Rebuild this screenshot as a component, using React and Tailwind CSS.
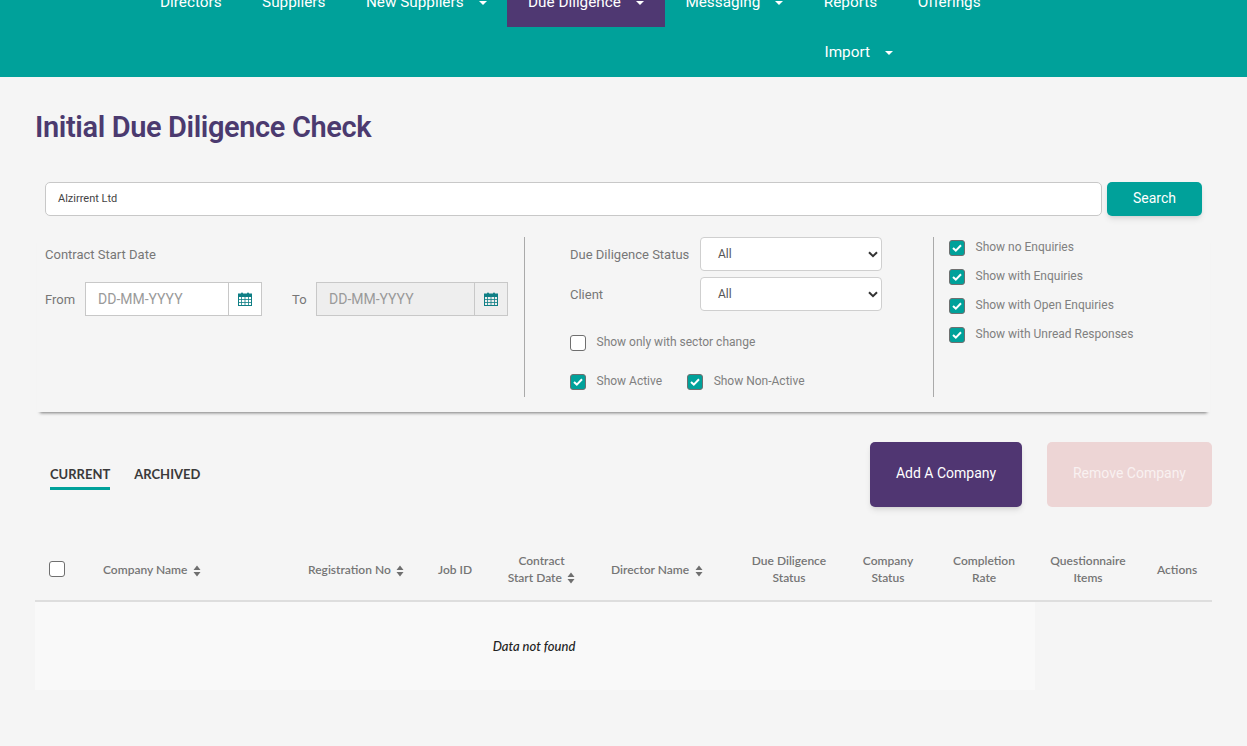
const teal = 'bg-[#00a19a]';

function Caret() {
  return <span className="ml-[15px] inline-block h-0 w-0 border-x-[4px] border-t-[4px] border-x-transparent border-t-white" />;
}

function NavItem({ label, caret, active }) {
  return (
    <a className={`flex h-[50px] items-center pt-[1px] text-[15.3px] text-white ${active ? 'bg-[#4f3872] px-[21.25px]' : 'px-[20.25px]'}`}>
      {label}
      {caret && <Caret />}
    </a>
  );
}

function CalendarIcon() {
  return (
    <svg width="14" height="14" viewBox="0 0 14 14" className="text-[#0f7f85]">
      <rect x="0.5" y="2" width="13" height="11.5" fill="none" stroke="currentColor" />
      <rect x="0.5" y="2" width="13" height="3" fill="currentColor" />
      <rect x="3" y="0.5" width="2" height="3.5" rx="1" fill="currentColor" />
      <rect x="9" y="0.5" width="2" height="3.5" rx="1" fill="currentColor" />
      <path d="M0.5 7.5H13.5M0.5 10.5H13.5M3.5 5V13.5M7 5V13.5M10.5 5V13.5" stroke="currentColor" strokeWidth="0.8" fill="none" />
    </svg>
  );
}

function SortIcon() {
  return (
    <svg width="8" height="12" viewBox="0 0 8 12" className="ml-[5.5px] inline-block text-[#6f6f6f]">
      <path d="M4 0.5L7.5 5H0.5Z M4 11.5L0.5 7H7.5Z" fill="currentColor" />
    </svg>
  );
}

function Check({ checked, label, className = '' }) {
  return (
    <label className={`flex items-center ${className}`}>
      <span className={`flex h-[16px] w-[16px] items-center justify-center rounded-[3px] border border-[#6f6f6f] ${checked ? teal : 'bg-white'}`}>
        {checked && (
          <svg width="10" height="8" viewBox="0 0 10 8">
            <path d="M1 4L3.8 6.6L9 1.2" fill="none" stroke="white" strokeWidth="2" />
          </svg>
        )}
      </span>
      <span className="-mt-[2px] ml-[10.5px] text-[12px] text-[#808080]">{label}</span>
    </label>
  );
}

function DateInput({ label, disabled, labelClass, fieldClass }) {
  return (
    <div className="flex items-center">
      <span className={`pt-[1px] text-[13px] text-[#777] ${labelClass}`}>{label}</span>
      <div className={`flex h-[34px] border border-[#c8c8c8] ${fieldClass} ${disabled ? 'bg-[#eee]' : 'bg-white'}`}>
        <span className="flex flex-1 items-center pt-[1px] pl-[12px] text-[14px] text-[#9a9a9a]">DD-MM-YYYY</span>
        <span className="flex w-[33px] items-center justify-center border-l border-[#c8c8c8]">
          <CalendarIcon />
        </span>
      </div>
    </div>
  );
}

function Select() {
  return (
    <div className="flex h-[34px] w-[182px] items-center justify-between rounded-[4px] border border-[#cfcfcf] bg-white pr-[3px] pl-[17px] text-[12px] text-[#555]">
      All
      <svg width="10" height="7" viewBox="0 0 10 7">
        <path d="M1 1.2L5 5.2L9 1.2" fill="none" stroke="#333" strokeWidth="2" />
      </svg>
    </div>
  );
}

function Th({ children, className = '' }) {
  return <div className={`flex h-full flex-col justify-center ${className}`}>{children}</div>;
}

export default function App() {
  return (
    <div className="h-[746px] overflow-hidden bg-[#f5f5f5] font-['Roboto',sans-serif]">
      <header className={`-mt-[23px] h-[100px] ${teal}`}>
        <nav className="flex pl-[139.75px]">
          <NavItem label="Directors" />
          <NavItem label="Suppliers" />
          <NavItem label="New Suppliers" caret />
          <NavItem label="Due Diligence" caret active />
          <NavItem label="Messaging" caret />
          <NavItem label="Reports" />
          <NavItem label="Offerings" />
        </nav>
        <nav className="flex pl-[804.25px]">
          <NavItem label="Import" caret />
        </nav>
      </header>

      <main className="px-[35px]">
        <h1 className="mt-[30px] h-[41px] text-[29px] leading-[40px] font-semibold tracking-[-0.38px] text-[#4b3a6f]">
          Initial Due Diligence Check
        </h1>

        <div className="mt-[34px] ml-[10px] flex w-[1157px] gap-[5px]">
          <div className="flex h-[34px] flex-1 items-center rounded-[5px] border border-[#c8c8c8] bg-white pl-[12px] text-[11px] text-[#444]">
            Alzirrent Ltd
          </div>
          <button className={`h-[34px] w-[95px] rounded-[5px] pb-[1px] text-[14px] text-white shadow-md ${teal}`}>
            Search
          </button>
        </div>

        <section className="mt-[21px] ml-[2px] flex h-[175px] w-[1173px] shadow-[0_4px_3px_-3px_rgba(0,0,0,0.5)]">
          <div className="h-[160px] w-[488px] border-r border-[#aaa] pl-[8px]">
            <p className="mt-[9px] text-[13px] leading-[18px] text-[#777]">Contract Start Date</p>
            <div className="mt-[18px] flex gap-[30px]">
              <DateInput label="From" labelClass="w-[40px]" fieldClass="w-[177px]" />
              <DateInput label="To" disabled labelClass="w-[24px]" fieldClass="w-[192px]" />
            </div>
          </div>

          <div className="h-[160px] w-[409px] border-r border-[#aaa] pl-[45px]">
            <div className="flex items-center">
              <span className="w-[130px] pt-[2px] text-[13px] text-[#777]">Due Diligence Status</span>
              <Select />
            </div>
            <div className="mt-[6px] flex items-center">
              <span className="w-[130px] pt-[2px] text-[13px] text-[#777]">Client</span>
              <Select />
            </div>
            <Check label="Show only with sector change" className="mt-[24px]" />
            <div className="mt-[23px] flex">
              <Check checked label="Show Active" />
              <Check checked label="Show Non-Active" className="ml-[25px]" />
            </div>
          </div>

          <div className="flex flex-col gap-[13px] pt-[3px] pl-[15px]">
            <Check checked label="Show no Enquiries" />
            <Check checked label="Show with Enquiries" />
            <Check checked label="Show with Open Enquiries" />
            <Check checked label="Show with Unread Responses" />
          </div>
        </section>

        <div className="mt-[30px] flex h-[65px] items-start">
          <div className="ml-[15px] flex gap-[24px] pt-[23px] font-['Lato',sans-serif] text-[13px] font-bold text-[#3a3a3a]">
            <span className="h-[25px] border-b-[3px] border-[#00a19a]">CURRENT</span>
            <span>ARCHIVED</span>
          </div>
          <button className="ml-auto h-[65px] w-[152px] rounded-[5px] bg-[#503672] pb-[2px] text-[14px] text-white shadow-md">
            Add A Company
          </button>
          <button className="ml-[25px] h-[65px] w-[165px] rounded-[5px] bg-[#edd5d5] pb-[2px] text-[14px] text-[#f9f1f1]">
            Remove Company
          </button>
        </div>

        <div className="mt-[32px] grid h-[63px] w-[1177px] grid-cols-[68px_205px_130px_55px_97px_140px_118px_80px_112px_96px_76px] items-center border-b-2 border-[#dedede] font-['Lato',sans-serif] text-[12px] leading-[17px] font-semibold text-[#757575]">
          <Th className="pb-[2px] pl-[14px]">
            <span className="h-[16px] w-[16px] rounded-[3px] border border-[#6f6f6f] bg-white" />
          </Th>
          <Th><span>Company Name<SortIcon /></span></Th>
          <Th><span>Registration No<SortIcon /></span></Th>
          <Th>Job ID</Th>
          <Th className="pb-[2px] text-center">
            <span>Contract</span>
            <span>Start Date<SortIcon /></span>
          </Th>
          <Th className="pl-[21px]"><span>Director Name<SortIcon /></span></Th>
          <Th className="pb-[2px] text-center"><span>Due Diligence</span><span>Status</span></Th>
          <Th className="pb-[2px] text-center"><span>Company</span><span>Status</span></Th>
          <Th className="pb-[2px] text-center"><span>Completion</span><span>Rate</span></Th>
          <Th className="pb-[2px] text-center"><span>Questionnaire</span><span>Items</span></Th>
          <Th className="pl-[21px]">Actions</Th>
        </div>

        <div className="flex h-[88px] w-[1000px] items-center justify-center bg-[#f9f9f9] pt-[2px] pr-[2px] font-['Lato',sans-serif] text-[13px] font-medium text-[#222] italic">
          Data not found
        </div>
      </main>
    </div>
  );
}
